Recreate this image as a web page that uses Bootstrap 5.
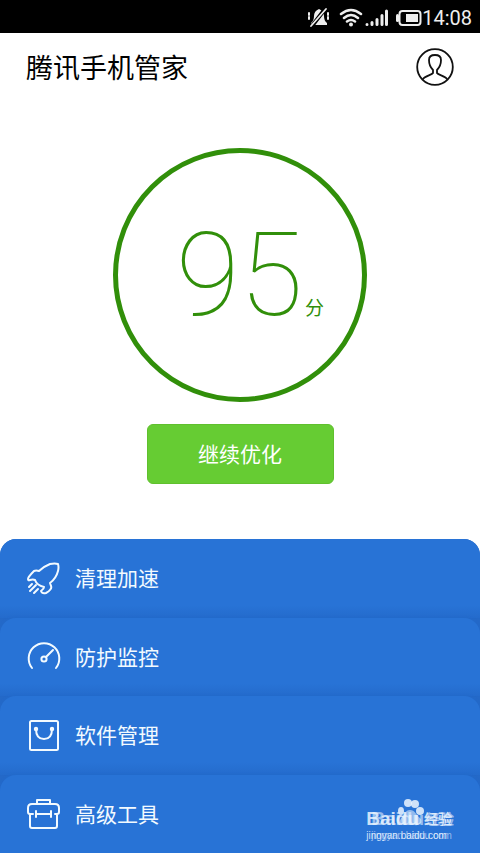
<!DOCTYPE html>
<html lang="zh-CN">
<head>
<meta charset="utf-8">
<meta name="viewport" content="width=device-width, initial-scale=1">
<title>腾讯手机管家</title>
<link href="https://cdn.jsdelivr.net/npm/bootstrap@5.3.0/dist/css/bootstrap.min.css" rel="stylesheet">
<style>
  body { font-family: Roboto, "Noto Sans CJK SC", sans-serif; }
  svg { display: block; flex: none; fill: none; stroke: currentColor; stroke-linecap: round; stroke-linejoin: round; }
  .status-bar { height: 33px; padding-right: 8px; padding-top: 2px; font-size: 20px; color: #eee; }
  .app-header { padding: 15px 26px 0; }
  .app-title { font-size: 27px; line-height: 38px; padding-top: 2px; }
  .profile-btn { color: #111; }
  .score-ring { width: 254px; height: 254px; margin-top: 60px; border: 5px solid #318f0a; color: #318f0a; padding: 64px 0 0 20px; }
  .score-value { font-size: 116px; line-height: 116px; font-weight: 100; }
  .score-unit { font-size: 19px; line-height: 28px; padding-left: 2px; }
  .optimize-btn { width: 187px; height: 60px; margin: 22px 0 55px; padding: 10px 0 6px; font-size: 21px; --bs-btn-color: #fff; --bs-btn-bg: #66cc33; --bs-btn-border-color: #60c02e; --bs-btn-hover-color: #fff; --bs-btn-hover-bg: #5cbc2c; --bs-btn-border-radius: 6px; }
  .feature-menu { background: #2469c8; border-radius: 16px 16px 0 0; overflow: hidden; }
  .feature-link { min-height: 78px; padding: 2px 27px 0; gap: 14px; font-size: 21px; line-height: 30px; color: #f2faff; background: linear-gradient(#2873d6 84%, #246bcc); border-radius: 16px 16px 0 0; box-shadow: 0 -1px 2px #236aca; }
  .feature-link:last-child { background: #2873d6; }
  .watermark { right: 28px; bottom: 12px; color: rgba(235,245,255,.85); font-family: "Liberation Sans", "Noto Sans CJK SC", sans-serif; text-shadow: 5px 0 0 rgba(225,238,255,.6); pointer-events: none; }
  .mark-name { font-size: 19px; line-height: 22px; font-weight: 700; }
  .mark-cn { font-size: 14px; margin-left: 5px; text-shadow: 2px 0 0 rgba(225,238,255,.6); }
  .mark-url { font-size: 10px; line-height: 11px; padding-right: 3px; }
  .mark-paw { left: 31px; top: -9px; }
</style>
<script src="https://cdn.jsdelivr.net/npm/bootstrap@5.3.0/dist/js/bootstrap.bundle.min.js"></script>
</head>
<body class="bg-white text-black">
<div class="d-flex flex-column min-vh-100 position-relative">
  <div class="status-bar bg-black d-flex align-items-center justify-content-end">
    <svg width="115" height="24" viewBox="0 0 115 24" aria-hidden="true">
      <path d="M4 17Q7 15 7 10Q7 5 12 3Q17 5 17 10Q17 15 20 17V19H4Z" fill="currentColor" stroke="none"/>
      <path d="M18 3 5 20" stroke="#000" stroke-width="4"/>
      <path d="M19 3 4 20" stroke-width="1.8"/>
      <path d="M2 7v2m0 2v2M21 7v2m0 2v2" stroke-width="2"/>
      <path d="M34 8Q44 0 54 8M37 12Q44 6 51 12M40 15.500Q44 12.500 48 15.500" stroke-width="2.500"/>
      <circle cx="44" cy="18.500" r="2" fill="currentColor" stroke="none"/>
      <path d="M60 18.500v0M65 18.500v-2M70 18.500v-5M75 18.500v-9M79.500 18.500V5" stroke-width="3"/>
      <rect x="92.500" y="5" width="21" height="14" rx="3" stroke-width="2"/>
      <rect x="99" y="8" width="12" height="8" fill="currentColor" stroke="none"/>
      <path d="M90.500 9.500v5" stroke-width="3"/>
    </svg>
    <span>14:08</span>
  </div>

  <header class="app-header d-flex align-items-start justify-content-between">
    <h1 class="app-title m-0 fw-normal">腾讯手机管家</h1>
    <button class="profile-btn btn p-0 border-0" type="button" aria-label="个人中心">
      <svg width="38" height="38" viewBox="0 0 38 38" stroke-width="1.8">
        <circle cx="19" cy="19" r="17.800"/>
        <path d="M7 31C9 28 16 27 17 25V22C14 19 13 17 13 12C13 8 16 7 19 7S25 8 25 12C25 17 24 19 21 22V25C22 27 29 28 31 31"/>
      </svg>
    </button>
  </header>

  <main class="d-flex flex-column align-items-center">
    <div class="score-ring rounded-circle d-flex align-items-baseline justify-content-center">
      <span class="score-value">95</span><span class="score-unit">分</span>
    </div>
    <button class="optimize-btn btn" type="button">继续优化</button>
  </main>

  <nav class="feature-menu d-flex flex-column flex-grow-1" aria-label="功能">
    <a class="feature-link d-flex flex-fill align-items-center text-decoration-none" href="#clean">
      <svg width="34" height="34" viewBox="0 0 34 34" stroke-width="2">
        <path d="M31 2Q28 1 23 2C18 4 15 6 12 9Q9 8 7 9C4 12 1 15 1 17Q1 19 3 18Q6 17 8 18C9 21 13 24 17 25Q17 27 14 29Q15 32 19 31C23 29 25 26 24 24L23 21C27 18 30 13 31 9Q32 5 31 2Z"/>
        <path d="M5 22l-3 3M9 23l-6 6M11 27l-4 4"/>
      </svg>
      <span>清理加速</span>
    </a>
    <a class="feature-link d-flex flex-fill align-items-center text-decoration-none" href="#protect">
      <svg width="34" height="34" viewBox="0 0 34 34" stroke-width="2">
        <path d="M5 27A15.300 15.300 0 1 1 29 27M19 16l7-7"/>
        <circle cx="17" cy="18" r="2.600"/>
      </svg>
      <span>防护监控</span>
    </a>
    <a class="feature-link d-flex flex-fill align-items-center text-decoration-none" href="#software">
      <svg width="34" height="34" viewBox="0 0 34 34" stroke-width="2">
        <rect x="3" y="2" width="28" height="29" rx="1.500"/>
        <path d="M9 10C9 17 12 20 17 20S25 17 25 10"/>
        <circle cx="9" cy="10" r="1.200" fill="currentColor"/>
        <circle cx="25" cy="10" r="1.200" fill="currentColor"/>
      </svg>
      <span>软件管理</span>
    </a>
    <a class="feature-link d-flex flex-fill align-items-center text-decoration-none" href="#tools">
      <svg width="34" height="34" viewBox="0 0 34 34" stroke-width="2">
        <path d="M10 6V2h13v4M3 17V28Q3 30 5 30H28Q30 30 30 28V17M9 13v6M24 13v6M9 16h15"/>
        <path d="M6 16H3Q1 16 1 14V10Q1 6 5 6H28Q32 6 32 10V14Q32 16 30 16H28"/>
      </svg>
      <span>高级工具</span>
    </a>
  </nav>

  <div class="watermark position-absolute" aria-hidden="true">
    <svg class="mark-paw position-absolute" width="32" height="28" viewBox="0 0 32 28">
      <g fill="currentColor" stroke="none">
        <ellipse cx="4" cy="12" rx="3" ry="4"/><ellipse cx="11" cy="4" rx="4" ry="4"/><ellipse cx="18" cy="5" rx="4" ry="4"/><ellipse cx="23" cy="12" rx="4" ry="4"/>
        <path d="M13 11C18 11 19 16 24 20Q26 27 17 26H8Q0 26 4 19C8 16 8 11 13 11Z" opacity=".65"/>
      </g>
    </svg>
    <div class="mark-name d-flex align-items-center"><span>Baidu</span><span class="mark-cn">经验</span></div>
    <div class="mark-url">jingyan.baidu.com</div>
  </div>
</div>
</body>
</html>
